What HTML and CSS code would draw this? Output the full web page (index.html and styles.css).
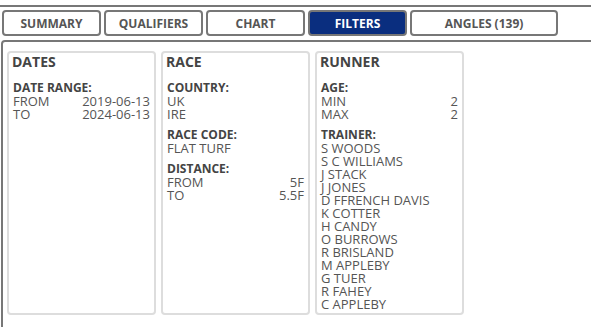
FILE: index.html
```html
<!DOCTYPE html>
<html>
<head>
<meta charset="utf-8">
<link rel="stylesheet" href="styles.css">
</head>
<body>
<div class="page">
  <div class="tabbar">
    <div class="tab">SUMMARY</div>
    <div class="tab">QUALIFIERS</div>
    <div class="tab">CHART</div>
    <div class="tab active">FILTERS</div>
    <div class="tab wide">ANGLES (139)</div>
  </div>
  <div class="panel">
    <div class="card">
      <div class="title">DATES</div>
      <div class="group">
        <div class="label">DATE RANGE:</div>
        <div class="row"><span>FROM</span><span>2019-06-13</span></div>
        <div class="row"><span>TO</span><span>2024-06-13</span></div>
      </div>
    </div>
    <div class="card">
      <div class="title">RACE</div>
      <div class="group">
        <div class="label">COUNTRY:</div>
        <div class="row"><span>UK</span></div>
        <div class="row"><span>IRE</span></div>
      </div>
      <div class="group">
        <div class="label">RACE CODE:</div>
        <div class="row"><span>FLAT TURF</span></div>
      </div>
      <div class="group">
        <div class="label">DISTANCE:</div>
        <div class="row"><span>FROM</span><span>5F</span></div>
        <div class="row"><span>TO</span><span>5.5F</span></div>
      </div>
    </div>
    <div class="card">
      <div class="title">RUNNER</div>
      <div class="group">
        <div class="label">AGE:</div>
        <div class="row"><span>MIN</span><span>2</span></div>
        <div class="row"><span>MAX</span><span>2</span></div>
      </div>
      <div class="group">
        <div class="label">TRAINER:</div>
        <div class="row"><span>S WOODS</span></div>
        <div class="row"><span>S C WILLIAMS</span></div>
        <div class="row"><span>J STACK</span></div>
        <div class="row"><span>J JONES</span></div>
        <div class="row"><span>D FFRENCH DAVIS</span></div>
        <div class="row"><span>K COTTER</span></div>
        <div class="row"><span>H CANDY</span></div>
        <div class="row"><span>O BURROWS</span></div>
        <div class="row"><span>R BRISLAND</span></div>
        <div class="row"><span>M APPLEBY</span></div>
        <div class="row"><span>G TUER</span></div>
        <div class="row"><span>R FAHEY</span></div>
        <div class="row"><span>C APPLEBY</span></div>
      </div>
    </div>
  </div>
</div>
</body>
</html>
```
FILE: styles.css
```css
html, body {
  margin: 0;
  padding: 0;
  background: #fff;
  overflow: hidden;
}
body {
  font-family: "Open Sans", "DejaVu Sans", sans-serif;
  color: #555;
}
.page {
  padding-top: 5px;
  width: 620px;
}
.tabbar {
  border-top: 2px solid #777;
  padding: 3px 0 4px 2px;
  display: flex;
  gap: 3px;
}
.tab {
  box-sizing: border-box;
  width: 99px;
  height: 26px;
  border: 2px solid #777;
  border-radius: 4px;
  font-size: 12px;
  font-weight: 700;
  color: #555;
  display: flex;
  align-items: center;
  justify-content: center;
  background: #fff;
}
.tab.wide {
  width: 148px;
}
.tab.active {
  background: #0a2e7f;
  color: #fff;
}
.panel {
  margin-left: 1px;
  border: 2px solid #777;
  border-radius: 4px;
  padding: 9px 4px 10px 4px;
  display: flex;
  gap: 5px;
  min-height: 300px;
  align-items: stretch;
}
.card {
  box-sizing: border-box;
  width: 149px;
  height: 264px;
  border: 2px solid #ddd;
  border-radius: 4px;
  padding: 1px 4px 0 3px;
}
.title {
  font-size: 14px;
  font-weight: 700;
  line-height: 16px;
  color: #444;
  margin-bottom: 10px;
}
.group {
  padding-left: 1px;
  margin-bottom: 6px;
}
.label {
  font-size: 12px;
  font-weight: 700;
  line-height: 15px;
  color: #444;
}
.row {
  display: flex;
  justify-content: space-between;
  font-size: 13px;
  line-height: 13px;
  color: #555;
}
```
